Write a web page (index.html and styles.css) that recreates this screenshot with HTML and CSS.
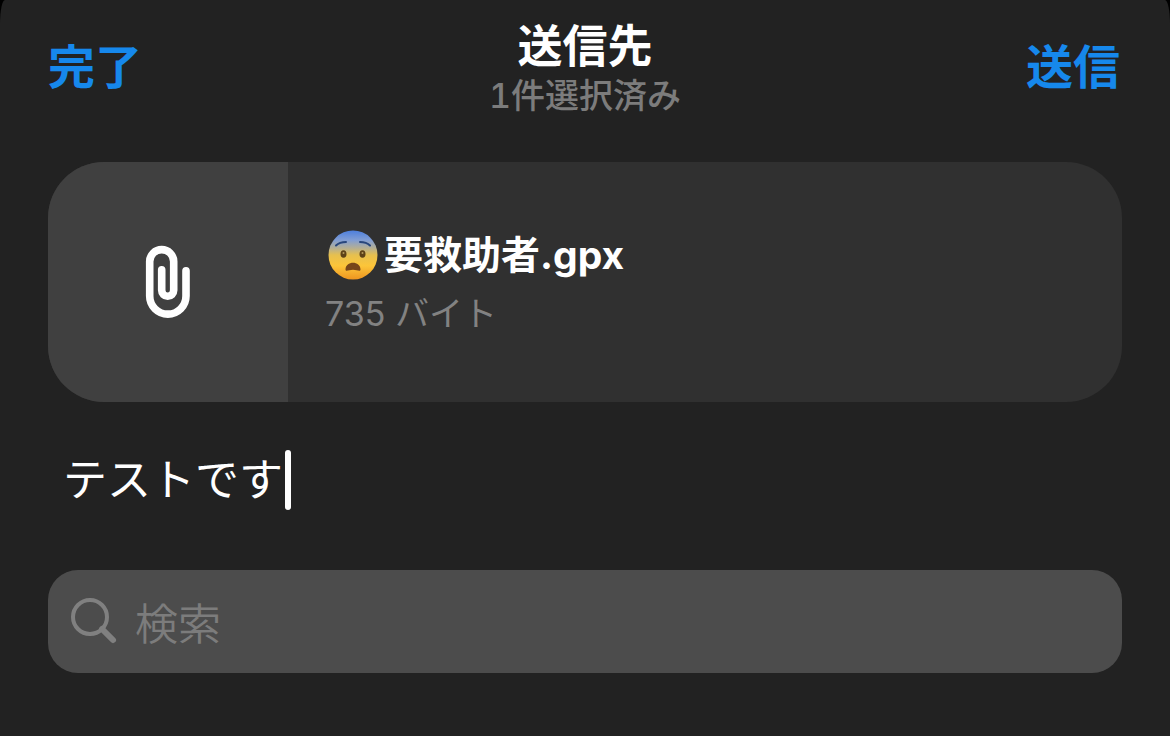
FILE: index.html
```html
<!DOCTYPE html>
<html lang="ja">
<head>
<meta charset="utf-8">
<meta name="viewport" content="width=device-width, initial-scale=1">
<title>送信先</title>
<link rel="stylesheet" href="styles.css">
</head>
<body>
<main class="sheet">
  <header class="bar">
    <button class="action" type="button">完了</button>
    <div class="heading">
      <h1 class="title">送信先</h1>
      <p class="count">1件選択済み</p>
    </div>
    <button class="action action-end" type="button">送信</button>
  </header>

  <section class="file" aria-label="添付ファイル">
    <div class="thumb">
      <svg class="clip" viewBox="0 0 46 74" aria-hidden="true">
        <path d="M16.700 24.800V45.300a6 6 0 0 0 12 0V16.600a12 12 0 0 0-24 0V51a18.150 18.150 0 0 0 36.300 0V25.800" fill="none" stroke="#fff" stroke-width="7.600" stroke-linecap="round"/>
      </svg>
    </div>
    <div class="info">
      <h2 class="name">
        <svg class="emoji" viewBox="0 0 50 50" role="img" aria-label="😨">
          <defs>
            <linearGradient id="face" x1="0" y1="0" x2="0" y2="1">
              <stop offset="0" stop-color="#4d7fdd"/>
              <stop offset=".2" stop-color="#829ed3"/>
              <stop offset=".36" stop-color="#b5af93"/>
              <stop offset=".5" stop-color="#e6c04f"/>
              <stop offset=".72" stop-color="#fcc539"/>
              <stop offset="1" stop-color="#ee9520"/>
            </linearGradient>
          </defs>
          <circle cx="25" cy="25" r="24.500" fill="url(#face)"/>
          <path d="M8 15.500q3.500-3.500 10-3.500M32 12q6.500 0 10 3.500" fill="none" stroke="#28467c" stroke-width="2" stroke-linecap="round"/>
          <ellipse cx="15.500" cy="24" rx="3" ry="3.800" fill="#5d4218"/>
          <ellipse cx="34.500" cy="24" rx="3" ry="3.800" fill="#5d4218"/>
          <circle cx="15.500" cy="23" r="1" fill="#b79a5c"/>
          <circle cx="34.500" cy="23" r="1" fill="#b79a5c"/>
          <path d="M17.500 39.500c0-9 15-9 15 0 0 2.500-3.500.3-7.500.3s-7.500 2.200-7.500-.3z" fill="#76451a"/>
        </svg>
        <span>要救助者.gpx</span>
      </h2>
      <p class="size">735 バイト</p>
    </div>
  </section>

  <div class="message">
    <input class="message-input" type="text" value="テストです" aria-label="メッセージ">
    <span class="caret"></span>
  </div>

  <label class="search">
    <svg class="lens" viewBox="0 0 48 48" aria-hidden="true">
      <circle cx="20" cy="19" r="17" fill="none" stroke="#808080" stroke-width="4"/>
      <path d="M32 31L43 42" stroke="#808080" stroke-width="6" stroke-linecap="round"/>
    </svg>
    <input class="search-input" type="search" placeholder="検索" aria-label="検索">
  </label>
</main>
</body>
</html>
```
FILE: styles.css
```css
* {
  box-sizing: border-box;
}

body {
  margin: 0;
  background: #000;
  color: #fff;
  font-family: Inter, "Noto Sans CJK JP", sans-serif;
}

h1,
h2,
p {
  margin: 0;
}

button,
input {
  border: 0;
  padding: 0;
  background: none;
  color: inherit;
  font: inherit;
  outline: 0;
}

.sheet {
  min-height: 100vh;
  padding: 20px 48px 62px;
  background: #222;
  border-radius: 5px 5px 0 0 / 24px 24px 0 0;
}

.bar {
  display: grid;
  grid-template-columns: 1fr auto 1fr;
  align-items: center;
  margin-bottom: 44px;
}

.action {
  justify-self: start;
  padding-bottom: 4px;
  color: #1688ec;
  font-size: 47px;
  line-height: 60px;
  font-weight: 700;
  cursor: pointer;
}

.action-end {
  justify-self: end;
  padding-right: 2px;
}

.heading {
  text-align: center;
}

.title {
  font-size: 45px;
  line-height: 54px;
  font-weight: 700;
}

.count {
  color: #7c7c7c;
  font-size: 34px;
  line-height: 44px;
  font-weight: 500;
  font-variant-numeric: tabular-nums;
}

.file {
  display: flex;
  min-height: 240px;
  margin-bottom: 40px;
  overflow: hidden;
  border-radius: 56px;
  background: #303030;
}

.thumb {
  display: grid;
  flex: 0 0 240px;
  place-items: center;
  background: #404040;
}

.clip {
  width: 46px;
  height: 74px;
}

.info {
  display: flex;
  flex-direction: column;
  justify-content: center;
  padding-top: 4px;
  padding-left: 37px;
}

.name {
  display: flex;
  align-items: center;
  gap: 6px;
  padding-left: 3px;
  font-size: 39px;
  line-height: 60px;
  font-weight: 700;
}

.emoji {
  width: 50px;
  height: 50px;
}

.size {
  color: #828282;
  font-size: 34px;
  line-height: 58px;
}

.message {
  display: flex;
  align-items: center;
  margin-bottom: 52px;
  padding-left: 15px;
}

.message-input {
  field-sizing: content;
  max-width: 100%;
  height: 76px;
  padding-bottom: 6px;
  font-size: 44px;
  font-weight: 400;
}

.caret {
  width: 6px;
  height: 60px;
  margin-left: 2px;
  border-radius: 3px;
  background: #fff;
}

.search {
  display: flex;
  align-items: center;
  gap: 17px;
  height: 103px;
  padding: 0 22px;
  border-radius: 30px;
  background: #4c4c4c;
}

.lens {
  flex: none;
  width: 48px;
  height: 48px;
}

.search-input {
  flex: 1;
  min-width: 0;
  height: 76px;
  padding-top: 4px;
  font-size: 43px;
  font-weight: 350;
}

.search-input::placeholder {
  color: #7c7c7c;
}
```
